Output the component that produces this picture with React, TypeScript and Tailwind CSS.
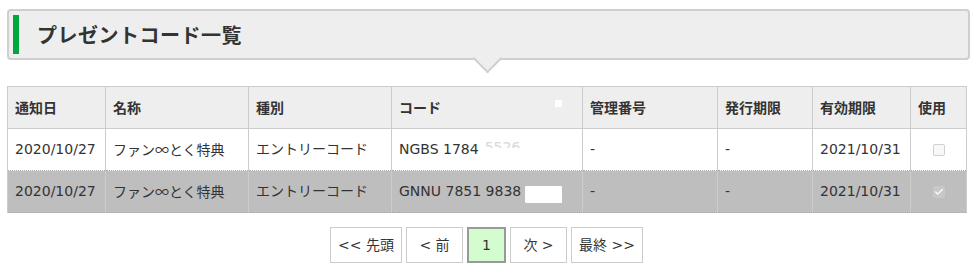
import { Check } from "lucide-react";

const cols = [
  { label: "通知日", w: "w-[98px]" },
  { label: "名称", w: "w-[143px]" },
  { label: "種別", w: "w-[143px]" },
  { label: "コード", w: "w-[191px]" },
  { label: "管理番号", w: "w-[135px]" },
  { label: "発行期限", w: "w-[95px]" },
  { label: "有効期限", w: "w-[98px]" },
  { label: "使用", w: "w-[56px]" },
];

const rows = [
  { date: "2020/10/27", name: "ファン∞とく特典", kind: "エントリーコード", code: "NGBS 1784", used: false },
  { date: "2020/10/27", name: "ファン∞とく特典", kind: "エントリーコード", code: "GNNU 7851 9838", used: true },
];

export default function App() {
  return (
    <div className="min-h-[271px] bg-white px-[7px] pt-[9px] text-[14px] text-[#333] [font-family:'DejaVu_Sans','Noto_Sans_CJK_JP',sans-serif]">
      <div className="relative">
        <div className="flex h-[51px] items-center rounded-[4px] border-2 border-[#cfcfcf] bg-[#eeeeee] pl-[4px]">
          <div className="h-[39px] w-[6px] bg-[#00a73c]" />
          <h1 className="ml-[18px] text-[20px] font-bold tracking-[0.5px] text-[#333] [font-family:'Noto_Sans_CJK_JP',sans-serif]">
            プレゼントコード一覧
          </h1>
        </div>
        <div className="absolute left-[470px] top-[39px] h-[21px] w-[21px] rotate-45 border-b-2 border-r-2 border-[#cfcfcf] bg-[#eeeeee]" />
      </div>

      <table className="mt-[26px] w-[959px] table-fixed border-collapse">
        <thead>
          <tr className="h-[42px] bg-[#eeeeee]">
            {cols.map((c) => (
              <th
                key={c.label}
                className={`${c.w} relative border border-[#cccccc] px-[7px] text-left font-bold [font-family:'Noto_Sans_CJK_JP',sans-serif]`}
              >
                {c.label}
                {c.label === "コード" && (
                  <span className="absolute right-[20px] top-[13px] h-[7px] w-[7px] bg-white" />
                )}
              </th>
            ))}
          </tr>
        </thead>
        <tbody>
          {rows.map((r, i) => (
            <tr
              key={i}
              className={`h-[42px] border-t border-dotted border-t-[#a9a9a9] border-b border-b-[#a9a9a9] ${
                r.used ? "bg-[#bebebe]" : "bg-white"
              }`}
            >
              <td className="border-x border-x-[#cccccc] px-[7px]">{r.date}</td>
              <td className="border-x border-x-[#cccccc] px-[7px] [font-family:'Noto_Sans_CJK_JP',sans-serif]">{r.name}</td>
              <td className="border-x border-x-[#cccccc] px-[7px]">{r.kind}</td>
              <td className="border-x border-x-[#cccccc] px-[7px] whitespace-nowrap">
                {r.code}
                {r.used ? (
                  <span className="ml-[4px] inline-block h-[17px] w-[37px] translate-y-[2px] rounded-[1px] bg-white align-middle" />
                ) : (
                  <span className="ml-[6px] inline-block h-[9px] overflow-hidden align-top leading-[16px] text-[#d8d8d8]">5526</span>
                )}
              </td>
              <td className="border-x border-x-[#cccccc] px-[7px]">-</td>
              <td className="border-x border-x-[#cccccc] px-[7px]">-</td>
              <td className="border-x border-x-[#cccccc] px-[7px]">2021/10/31</td>
              <td className="border-x border-x-[#cccccc] px-[7px] text-center">
                {r.used ? (
                  <span className="inline-flex h-[12px] w-[12px] items-center justify-center rounded-[2px] bg-[#c8c8c8] align-middle">
                    <Check className="h-[10px] w-[10px] text-white" strokeWidth={3} />
                  </span>
                ) : (
                  <span className="inline-block h-[12px] w-[12px] rounded-[2px] border border-[#d0d0d0] bg-[#f8f8f8] align-middle" />
                )}
              </td>
            </tr>
          ))}
        </tbody>
      </table>

      <div className="mt-[14px] flex justify-center gap-[4px] pr-[4px]">
        <span className="flex h-[36px] w-[72px] items-center justify-center border border-[#cccccc] bg-white">&lt;&lt; 先頭</span>
        <span className="flex h-[36px] w-[57px] items-center justify-center border border-[#cccccc] bg-white">&lt; 前</span>
        <span className="flex h-[36px] w-[39px] items-center justify-center border-2 border-[#999999] bg-[#d3fdcf]">1</span>
        <span className="flex h-[36px] w-[57px] items-center justify-center border border-[#cccccc] bg-white">次 &gt;</span>
        <span className="flex h-[36px] w-[72px] items-center justify-center border border-[#cccccc] bg-white">最終 &gt;&gt;</span>
      </div>
    </div>
  );
}
